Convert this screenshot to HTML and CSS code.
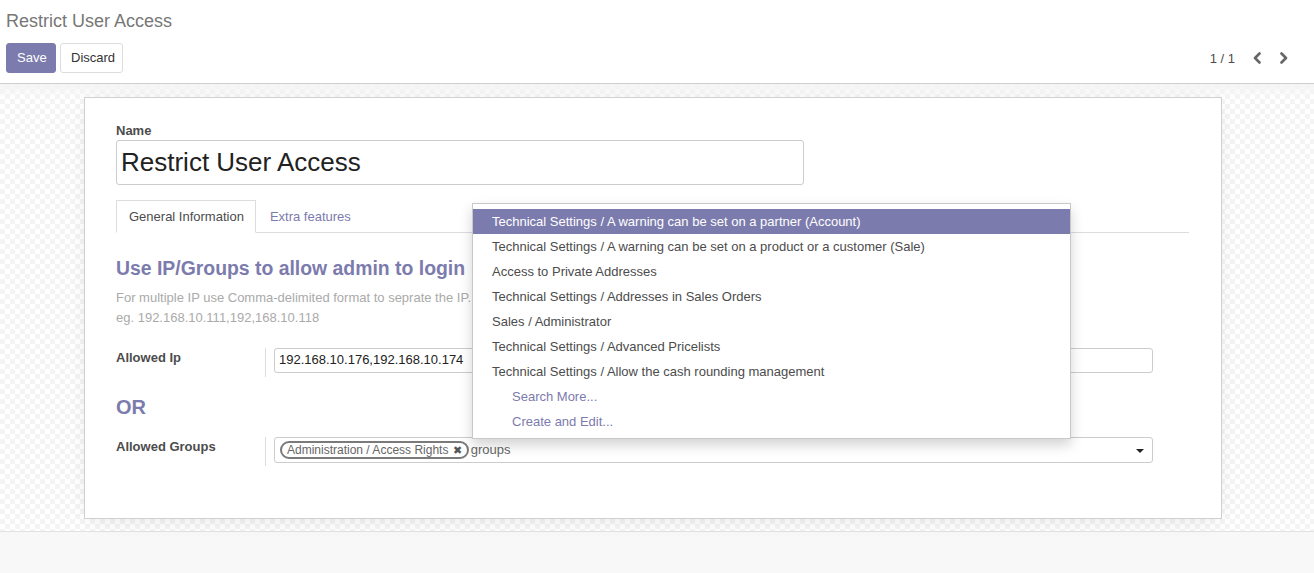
FILE: index.html
```html
<!DOCTYPE html>
<html>
<head>
<meta charset="utf-8">
<link rel="stylesheet" href="styles.css">
</head>
<body>
<div class="cp">
  <div class="cp-title">Restrict User Access</div>
  <div class="cp-row">
    <div class="cp-buttons">
      <button class="btn btn-primary">Save</button>
      <button class="btn btn-default">Discard</button>
    </div>
    <div class="pager">
      <span class="pager-value">1 / 1</span>
      <span class="pager-btn">
        <svg width="10" height="12" viewBox="0 0 10 12"><polyline points="7.5,1.5 3,6 7.5,10.5" fill="none" stroke="#666" stroke-width="2.6" stroke-linecap="round" stroke-linejoin="round"/></svg>
      </span>
      <span class="pager-btn">
        <svg width="10" height="12" viewBox="0 0 10 12"><polyline points="2.5,1.5 7,6 2.5,10.5" fill="none" stroke="#666" stroke-width="2.6" stroke-linecap="round" stroke-linejoin="round"/></svg>
      </span>
    </div>
  </div>
</div>
<div class="sheet-bg">
  <div class="sheet">
    <div class="name-label">Name</div>
    <div class="name-input">Restrict User Access</div>
    <ul class="tabs">
      <li class="tab active">General Information</li>
      <li class="tab">Extra features</li>
    </ul>
    <div class="tab-content">
      <h2 class="heading">Use IP/Groups to allow admin to login</h2>
      <div class="help">For multiple IP use Comma-delimited format to seprate the IP.<br>eg. 192.168.10.111,192,168.10.118</div>
      <div class="field-row row-ip">
        <div class="field-label">Allowed Ip</div>
        <div class="field-value">
          <div class="input">192.168.10.176,192.168.10.174</div>
        </div>
      </div>
      <h2 class="heading or">OR</h2>
      <div class="field-row row-groups">
        <div class="field-label">Allowed Groups</div>
        <div class="field-value">
          <div class="input input-m2m">
            <span class="tag">Administration / Access Rights <span class="tag-x">✖</span></span><span class="typed">groups</span>
            <span class="caret"></span>
          </div>
        </div>
      </div>
    </div>
  </div>
</div>
<div class="below"></div>
<ul class="dropdown">
  <li class="item hl">Technical Settings / A warning can be set on a partner (Account)</li>
  <li class="item">Technical Settings / A warning can be set on a product or a customer (Sale)</li>
  <li class="item">Access to Private Addresses</li>
  <li class="item">Technical Settings / Addresses in Sales Orders</li>
  <li class="item">Sales / Administrator</li>
  <li class="item">Technical Settings / Advanced Pricelists</li>
  <li class="item">Technical Settings / Allow the cash rounding management</li>
  <li class="item action">Search More...</li>
  <li class="item action">Create and Edit...</li>
</ul>
</body>
</html>
```

FILE: styles.css
```css
* { box-sizing: border-box; }
html, body { margin: 0; padding: 0; }
body {
  font-family: "Liberation Sans", Arial, sans-serif;
  font-size: 13px;
  color: #4c4c4c;
  background: #f8f8f8;
  width: 1314px;
  height: 573px;
  overflow: hidden;
  position: relative;
}
.cp {
  background: #fff;
  border-bottom: 1px solid #cfcfcf;
  height: 84px;
  padding: 10px 17px 0 6px;
}
.cp-title {
  font-size: 18px;
  line-height: 22px;
  color: #777;
}
.cp-row {
  margin-top: 11px;
  display: flex;
  justify-content: space-between;
  align-items: center;
}
.cp-buttons { display: flex; gap: 4px; }
.btn {
  font-family: inherit;
  font-size: 13px;
  line-height: 18px;
  padding: 5px 10px;
  border-radius: 3px;
  border: 1px solid #ccc;
  margin: 0;
}
.btn-primary {
  background: #7c7bad;
  border-color: #7c7bad;
  color: #fff;
  width: 50px;
}
.btn-default {
  background: #fff;
  color: #333;
  border-color: #ddd;
  width: 63px;
}
.pager { display: flex; align-items: center; }
.pager-value { color: #4c4c4c; margin-right: 8px; }
.pager-btn { width: 27px; display: flex; justify-content: center; }
.pager-btn svg { display: block; }
.sheet-bg {
  height: 448px;
  border-bottom: 1px solid #e2e2e2;
  padding-top: 13px;
  background-color: #fff;
  background-image:
    linear-gradient(to bottom, #f4f4f4 0, rgba(244,244,244,0) 14px),
    conic-gradient(#f4f4f4 25%, #fff 0 50%, #f4f4f4 0 75%, #fff 0);
  background-size: 100% 100%, 10px 10px;
}
.sheet {
  margin-left: 84px;
  width: 1138px;
  height: 422px;
  background: #fff;
  border: 1px solid #d0d0d0;
  box-shadow: 0 4px 20px -6px rgba(0,0,0,0.12);
  padding: 23px 32px 0 31px;
}
.name-label {
  font-weight: bold;
  line-height: 19px;
  color: #4c4c4c;
}
.name-input {
  width: 688px;
  height: 45px;
  border: 1px solid #ccc;
  border-radius: 3px;
  font-size: 26px;
  line-height: 42px;
  color: #222;
  padding: 0 4px;
}
.tabs {
  list-style: none;
  margin: 15px 0 0;
  padding: 0;
  display: flex;
  border-bottom: 1px solid #ddd;
}
.tab {
  padding: 6px 12px 6px 12px;
  line-height: 19px;
  border: 1px solid transparent;
  margin-bottom: -1px;
  margin-right: 1px;
  color: #7c7bad;
}
.tab.active {
  padding-right: 11px;
  border-color: #ddd;
  border-bottom-color: #fff;
  color: #4c4c4c;
  background: #fff;
}
.heading {
  margin: 24px 0 0;
  font-size: 19.4px;
  line-height: 23px;
  font-weight: bold;
  color: #7c7bad;
}
.help {
  margin-top: 8px;
  color: #aaa;
  line-height: 19.5px;
}
.field-row {
  display: flex;
}
.row-ip { margin-top: 21px; }
.or { margin-top: 19px; font-size: 20px; }
.row-groups { margin-top: 18px; }
.field-label {
  width: 150px;
  font-weight: bold;
  line-height: 19px;
  color: #4c4c4c;
  border-right: 1px solid #ddd;
  height: 29px;
}
.field-value { padding-left: 8px; }
.input {
  width: 879px;
  height: 25px;
  border: 1px solid #ccc;
  border-radius: 3px;
  color: #222;
  line-height: 22px;
  padding: 0 4px;
  position: relative;
}
.input-m2m {
  height: 26px;
  display: flex;
  align-items: center;
}
.tag {
  display: inline-block;
  border: 2px solid #7a7a7a;
  border-radius: 10px;
  font-size: 12px;
  line-height: 14px;
  color: #666;
  padding: 0 5px 0 5px;
  margin-left: 1px;
  white-space: nowrap;
}
.tag-x { font-size: 11px; color: #555; margin-left: 1px; }
.typed { color: #666; margin-left: 2px; }
.caret {
  position: absolute;
  right: 8px;
  top: 11px;
  width: 0;
  height: 0;
  border-left: 4px solid transparent;
  border-right: 4px solid transparent;
  border-top: 4px solid #222;
}
.below { height: 41px; }
.dropdown {
  position: absolute;
  left: 472px;
  top: 203px;
  width: 599px;
  height: 236px;
  margin: 0;
  padding: 5px 0 4px;
  list-style: none;
  background: #fff;
  border: 1px solid #c8c8c8;
  box-shadow: 0 6px 12px rgba(0,0,0,0.175);
}
.item {
  height: 25px;
  line-height: 25px;
  padding: 0 19px;
  color: #4c4c4c;
  white-space: nowrap;
}
.item.hl { background: #7c7bad; color: #fff; }
.item.action { padding-left: 39px; color: #7c7bad; }
```
